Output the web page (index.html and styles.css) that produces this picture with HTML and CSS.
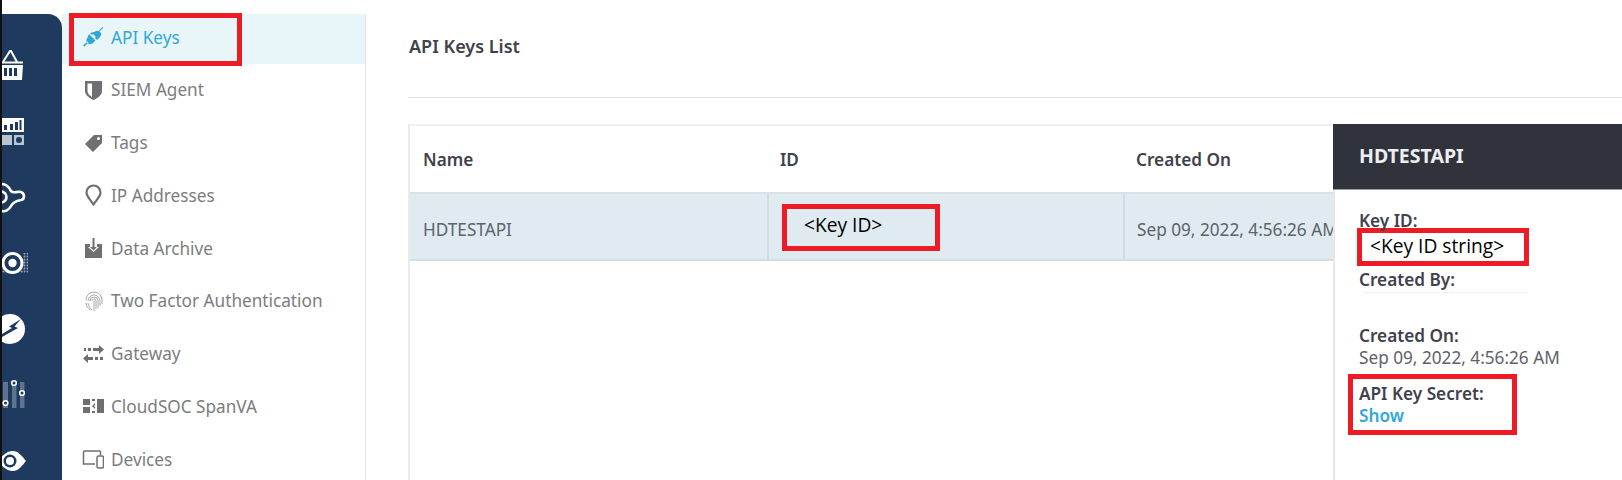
FILE: index.html
```html
<!DOCTYPE html>
<html lang="en">
<head>
  <meta charset="UTF-8">
  <title>API Keys</title>
  <link rel="stylesheet" href="styles.css">
</head>
<body>

<div class="page">
  <div class="strip"></div>

  <!-- main product rail, icons run off its left edge -->
  <div class="rail">
    <svg class="rail-icon" viewBox="0 0 26 40">
      <path d="M1 17 8 6h1l6 11" fill="none" stroke="#fff" stroke-width="2"/>
      <path d="M0 17.500h21" stroke="#fff" stroke-width="2"/>
      <path d="M0 20h21l-1 15H0z" fill="#fff"/>
      <path d="M2 23h3v8H2zM7 23h3v8H7zM12 23h3v8h-3z" fill="#1f3a5f"/>
    </svg>
    <svg class="rail-icon" viewBox="0 0 26 40">
      <path d="M0 7h22v14H0z" fill="#fff"/>
      <path d="M2 14h3v5H2zM8 13h3v6H8zM13 11h3v8h-3z" fill="#1f3a5f"/>
      <path d="M17.500 9h2v10h-2z" fill="#1f3a5f"/>
      <path d="M0 24h10v10H0z" fill="#b9c4d1"/>
      <path d="M12 24h10v10H12z" fill="#b9c4d1"/>
      <circle cx="17" cy="29" r="3" fill="#1f3a5f"/>
    </svg>
    <svg class="rail-icon" viewBox="0 0 26 40">
      <path d="M0 7c4 0 7 3 9 7 2 3 6 0 10 1 4 2 4 7 0 8-5 1-8 2-10 6-2 4-6 6-9 5" fill="none" stroke="#fff" stroke-width="2.600"/>
      <circle cx="-1" cy="20" r="5.500" fill="none" stroke="#fff" stroke-width="2.600"/>
    </svg>
    <svg class="rail-icon target" viewBox="0 0 26 40">
      <path d="M21 10h5v20H0v-5h21z" fill="url(#dots)"/>
      <circle cx="10.500" cy="20" r="9.500" fill="#1f3a5f" stroke="#fff" stroke-width="3"/>
      <circle cx="10.500" cy="20" r="4.200" fill="#fff"/>
      <defs>
        <pattern id="dots" width="3" height="3" patternUnits="userSpaceOnUse">
          <circle cx="1.500" cy="1.500" r="1" fill="#9aa8ba"/>
        </pattern>
      </defs>
    </svg>
    <svg class="rail-icon" viewBox="0 0 26 40">
      <circle cx="8" cy="20" r="15" fill="#fff"/>
      <path d="M19 10 7 17.500l3 1.500-10 6v3l16-9-3.500-1.500z" fill="#1f3a5f"/>
    </svg>
    <svg class="rail-icon" viewBox="0 0 26 40">
      <path d="M1 7h5v26H1zM10 7h4.500v26H10zM18 7h4.500v26H18z" fill="#5d7390"/>
      <circle cx="3.500" cy="28" r="2.300" fill="#1f3a5f" stroke="#fff" stroke-width="1.600"/>
      <circle cx="12" cy="8" r="2.300" fill="#1f3a5f" stroke="#fff" stroke-width="1.600"/>
      <circle cx="20" cy="18" r="2.300" fill="#1f3a5f" stroke="#fff" stroke-width="1.600"/>
    </svg>
    <svg class="rail-icon" viewBox="0 0 26 40">
      <path d="M-4 20C2 12 7 10 11 10c5 0 9 5 13 10-4 5-8 10-13 10-4 0-9-2-15-10z" fill="#fff"/>
      <circle cx="8" cy="20" r="6.500" fill="#1f3a5f"/>
      <circle cx="8" cy="20" r="4" fill="#fff"/>
    </svg>
  </div>

  <ul class="side-menu">
    <li class="menu-item active">
      <svg class="menu-icon" viewBox="0 0 22 22" fill="#2fa8d8">
        <path d="M7 8 13.500 14.500 11 17c-1.800 1.500-4 1.500-5.500 0s-1.500-3.700 0-5.500zM5.500 15.500 1 19.500l1.200 1.200L6.500 16.500z"/>
        <path d="M8 7 10 9l1-1 3 3-1 1 2 2 3-3c1.500-1.700 1.500-3.800 0-5.200s-3.500-1.500-5.200 0zM17 4.500 20.500 1l.8.800L17.800 5.300z"/>
      </svg>
      API Keys
    </li>
    <li class="menu-item">
      <svg class="menu-icon" viewBox="0 0 22 22">
        <path d="M3 2h17v10c0 4-4 7-8.500 9C7 19 3 16 3 12z" fill="#6f6f6f"/>
        <path d="M5.500 4.500H10v13.500c-2.500-1.500-4.500-3.500-4.500-6z" fill="#fff"/>
      </svg>
      SIEM Agent
    </li>
    <li class="menu-item">
      <svg class="menu-icon" viewBox="0 0 22 22">
        <path d="M3 12 12 3h8v8l-9 9z" fill="#6f6f6f"/>
        <circle cx="16.500" cy="6.500" r="1.500" fill="#fff"/>
      </svg>
      Tags
    </li>
    <li class="menu-item">
      <svg class="menu-icon" viewBox="0 0 22 22">
        <path d="M11.500 20.500C8 15 4.500 12.500 4.500 8.500a7 7 0 0 1 14 0c0 4-3.500 6.500-7 12z" fill="none" stroke="#6f6f6f" stroke-width="2.200"/>
      </svg>
      IP Addresses
    </li>
    <li class="menu-item">
      <svg class="menu-icon" viewBox="0 0 22 22">
        <path d="M3 7h5v3H6l5.500 5 5.500-5h-2V7h5v14H3z" fill="#6f6f6f"/>
        <path d="M10.500 1h2v9H15l-3.500 3.500L8 10h2.500z" fill="#6f6f6f"/>
      </svg>
      Data Archive
    </li>
    <li class="menu-item">
      <svg class="menu-icon" viewBox="0 0 22 22" fill="none" stroke="#a9a9a9" stroke-width="1">
        <path d="M4 10a8 8 0 0 1 16 0v4"/>
        <path d="M6 11a6 6 0 0 1 12 0v5"/>
        <path d="M8 11a4 4 0 0 1 8 0v7"/>
        <path d="M10 11a2 2 0 0 1 4 0v8"/>
        <path d="M12 11v10M4 13c0 3 2 5 4 7M6 13c0 3 2 5 4 7"/>
      </svg>
      Two Factor Authentication
    </li>
    <li class="menu-item">
      <svg class="menu-icon" viewBox="0 0 22 22" fill="#6f6f6f">
        <path d="M11 5h6V2l5 4.500-5 4.500V8h-6zM2 5h2v3H2zM6 5h3v3H6z"/>
        <path d="M11 14H6v-3l-5 4.500L6 20v-3h5zM13 14h3v3h-3zM18 14h3v3h-3z"/>
      </svg>
      Gateway
    </li>
    <li class="menu-item">
      <svg class="menu-icon" viewBox="0 0 22 22" fill="#6f6f6f">
        <path d="M1 4h7v6H1zM1 12h7v6H1zM15 4h7v14h-7zM10 4h3v2h-3zM10 16h3v2h-3z"/>
        <path d="m13 8-3 3 3 3v-2l-1-1 1-1z"/>
      </svg>
      CloudSOC SpanVA
    </li>
    <li class="menu-item">
      <svg class="menu-icon" viewBox="0 0 22 22" fill="none" stroke="#6f6f6f" stroke-width="1.500">
        <path d="M13 16H1.500V4a1 1 0 0 1 1-1h15a1 1 0 0 1 1 1v3"/>
        <rect x="15" y="8" width="6.500" height="12" rx="1.500"/>
      </svg>
      Devices
    </li>
  </ul>

  <div class="content">
    <h2 class="list-title">API Keys List</h2>

    <div class="key-table">
      <div class="table-head">
        <div class="col col-name">Name</div>
        <div class="col col-id">ID</div>
        <div class="col col-date">Created On</div>
      </div>
      <div class="table-row">
        <div class="col col-name">HDTESTAPI</div>
        <div class="col col-id">
          <div class="mark mark-id"><span class="typed">&lt;Key ID&gt;</span></div>
        </div>
        <div class="col col-date">Sep 09, 2022, 4:56:26 AM</div>
      </div>
    </div>

    <div class="detail">
      <div class="detail-head">HDTESTAPI</div>
      <div class="detail-body">
        <div class="label">Key ID:</div>
        <div class="mark mark-string"><span class="typed">&lt;Key ID string&gt;</span></div>
        <div class="label created-by">Created By:</div>
        <div class="scrubbed"></div>
        <div class="label created-on">Created On:</div>
        <div class="value">Sep 09, 2022, 4:56:26 AM</div>
        <div class="secret">
          <div class="mark mark-secret"></div>
          <div class="label">API Key Secret:</div>
          <a class="show-link" href="#">Show</a>
        </div>
      </div>
    </div>
  </div>

  <div class="mark mark-menu"></div>
</div>

</body>
</html>
```

FILE: styles.css
```css
* {
  margin: 0;
  padding: 0;
  box-sizing: border-box;
  list-style: none;
}

body {
  background-color: #fff;
  font-family: "Noto Sans", "Open Sans", sans-serif;
  overflow: hidden;
}

.page {
  display: flex;
  width: 1622px;
  height: 480px;
  position: relative;
  overflow: hidden;
}

.strip {
  width: 2px;
  background-color: #111;
}

/* product rail */
.rail {
  width: 60px;
  margin-top: 14px;
  padding-top: 31px;
  background-color: #1f3a5f;
  border-top-right-radius: 14px;
  overflow: hidden;
}

.rail-icon {
  display: block;
  width: 26px;
  height: 40px;
  margin-bottom: 26px;
  overflow: hidden;
}

/* settings menu */
.side-menu {
  width: 304px;
  margin-top: 14px;
  border-right: 1px solid #e3e5e8;
  flex-shrink: 0;
}

.menu-item {
  display: flex;
  align-items: center;
  gap: 7px;
  height: 50px;
  margin-bottom: 2.750px;
  padding: 0 0 4px 20px;
  color: #7b7d80;
  font-size: 17.200px;
}

.menu-item.active {
  background-color: #e9f6f9;
  color: #2fa8d8;
}

.menu-icon {
  width: 22px;
  height: 22px;
  flex-shrink: 0;
}

/* list */
.content {
  flex: 1;
  padding-left: 42px;
  position: relative;
}

.list-title {
  height: 98px;
  padding: 34px 0 0 1px;
  border-bottom: 1px solid #e1e3e5;
  color: #3f424c;
  font-size: 18px;
  font-weight: 600;
}

.key-table {
  margin-top: 26px;
  height: 400px;
  border-top: 2px solid #eeeff0;
  border-left: 2px solid #e9eaeb;
}

.table-head,
.table-row {
  display: flex;
  align-items: center;
}

.table-head {
  height: 66px;
  color: #3f424c;
  font-size: 17.200px;
  font-weight: 600;
}

.table-row {
  height: 69px;
  border-top: 2px solid #d9e1e6;
  border-bottom: 2px solid #d3dde3;
  background-color: #dfebf1;
  color: #5e6269;
  font-size: 17.200px;
}

.col {
  height: 100%;
  display: flex;
  align-items: center;
  padding-left: 13px;
  white-space: nowrap;
}

.table-row .col {
  padding-top: 5px;
}

.col-name {
  width: 357px;
}

.col-id {
  width: 356px;
  position: relative;
}

.table-row .col-id,
.table-row .col-date {
  border-left: 2px solid #cfdce3;
  padding-left: 12px;
}

/* red annotation boxes drawn over the screenshot */
.mark {
  border: 5px solid #ed1c24;
}

.mark-menu {
  position: absolute;
  left: 69px;
  top: 13px;
  width: 173px;
  height: 53px;
}

.mark-id {
  position: absolute;
  left: 13px;
  top: 10px;
  width: 158px;
  height: 47px;
  padding: 3px 0 0 17px;
}

.typed {
  display: block;
  color: #000;
  font-family: "Open Sans", "Noto Sans", sans-serif;
  font-size: 19.200px;
  line-height: 26px;
}

.mark-string {
  width: 172px;
  height: 38px;
  margin: -4px 0 0 -2px;
  padding: 0 0 0 8px;
}

.mark-secret {
  position: absolute;
  left: -11px;
  top: -9px;
  width: 169px;
  height: 61px;
}

/* slide over panel */
.detail {
  position: absolute;
  left: 967px;
  top: 124px;
  width: 300px;
  height: 356px;
  background-color: #fff;
  border-left: 2px solid #e6e7e8;
}

.detail-head {
  height: 66px;
  margin-left: -2px;
  padding: 18px 0 0 26px;
  background-color: #31333c;
  border-bottom: 1px solid #9a9ca0;
  color: #eceef2;
  font-size: 19.500px;
  font-weight: 700;
}

.detail-body {
  padding: 20px 0 0 24px;
  color: #5e6269;
  font-size: 17.200px;
  line-height: 22px;
}

.label {
  color: #3f424c;
  font-weight: 600;
}

.created-by {
  margin-top: 3px;
}

.scrubbed {
  width: 165px;
  height: 2px;
  margin: 1px 0 0 4px;
  border-top: 1px dotted #e4e6ef;
}

.created-on {
  margin-top: 31px;
}

.secret {
  position: relative;
  margin-top: 14px;
}

.show-link {
  color: #2fa8d8;
  font-weight: 600;
  text-decoration: none;
}
```
